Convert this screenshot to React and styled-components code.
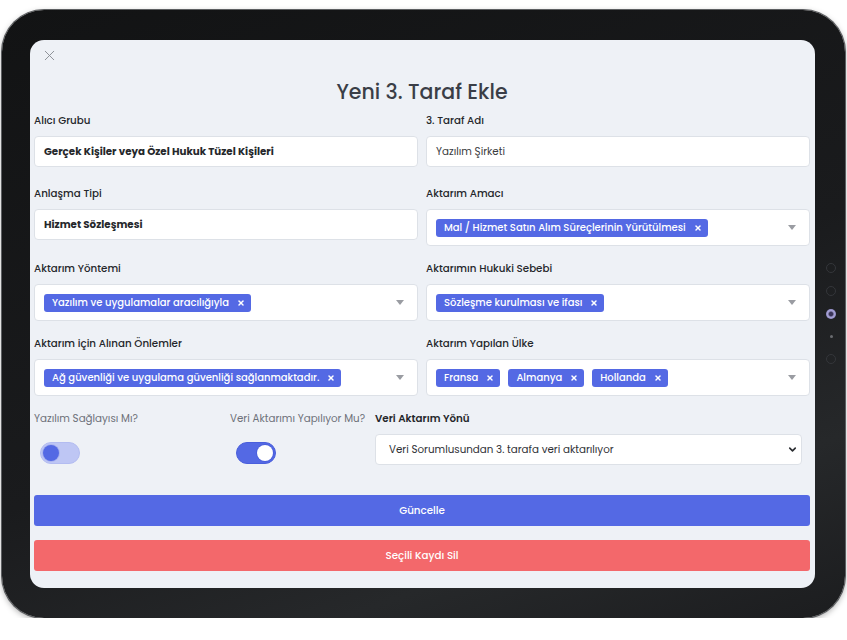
import React from "react";
import styled, { createGlobalStyle } from "styled-components";
import { X, ChevronDown } from "lucide-react";

const GlobalStyle = createGlobalStyle`
  html, body {
    margin: 0;
    padding: 0;
    background: #ffffff;
  }
  body {
    font-family: "Poppins", "Open Sans", "Noto Sans", sans-serif;
    color: #25272b;
  }
  * { box-sizing: border-box; }
`;

const rows = [
  [
    { label: "Alıcı Grubu", value: "Gerçek Kişiler veya Özel Hukuk Tüzel Kişileri", bold: true },
    { label: "3. Taraf Adı", value: "Yazılım Şirketi" },
  ],
  [
    { label: "Anlaşma Tipi", value: "Hizmet Sözleşmesi", bold: true },
    { label: "Aktarım Amacı", tags: ["Mal / Hizmet Satın Alım Süreçlerinin Yürütülmesi"] },
  ],
  [
    { label: "Aktarım Yöntemi", tags: ["Yazılım ve uygulamalar aracılığıyla"] },
    { label: "Aktarımın Hukuki Sebebi", tags: ["Sözleşme kurulması ve ifası"] },
  ],
  [
    { label: "Aktarım için Alınan Önlemler", tags: ["Ağ güvenliği ve uygulama güvenliği sağlanmaktadır."] },
    { label: "Aktarım Yapılan Ülke", tags: ["Fransa", "Almanya", "Hollanda"] },
  ],
];

export default function App() {
  return (
    <>
      <GlobalStyle />
      <Device>
        <Screen>
          <CloseButton>
            <X size={17} strokeWidth={1.3} />
          </CloseButton>
          <Title>Yeni 3. Taraf Ekle</Title>

          <FormGrid>
            {rows.map((row, i) =>
              row.map((f) => (
                <Field key={f.label} $first={i === 0}>
                  <Label>{f.label}</Label>
                  {f.tags ? (
                    <MultiSelect>
                      <Tags>
                        {f.tags.map((t) => (
                          <Tag key={t}>
                            {t}
                            <X size={8} strokeWidth={4.5} />
                          </Tag>
                        ))}
                      </Tags>
                      <Caret />
                    </MultiSelect>
                  ) : (
                    <Input $bold={f.bold}>{f.value}</Input>
                  )}
                </Field>
              ))
            )}
          </FormGrid>

          <ToggleRow>
            <ToggleField>
              <MutedLabel>Yazılım Sağlayısı Mı?</MutedLabel>
              <Switch $on={false}><Knob $on={false} /></Switch>
            </ToggleField>
            <ToggleField>
              <MutedLabel>Veri Aktarımı Yapılıyor Mu?</MutedLabel>
              <Switch $on={true}><Knob $on={true} /></Switch>
            </ToggleField>
            <ToggleField>
              <StrongLabel>Veri Aktarım Yönü</StrongLabel>
              <Select>
                Veri Sorumlusundan 3. tarafa veri aktarılıyor
                <ChevronDown size={11} strokeWidth={3.5} color="#2a2c30" />
              </Select>
            </ToggleField>
          </ToggleRow>

          <Button $color="#5469e4" $gap="30px">Güncelle</Button>
          <Button $color="#f3686b" $gap="14px">Seçili Kaydı Sil</Button>
        </Screen>

        <SideDots>
          <Dot />
          <Dot />
          <Dot $lens />
          <Dot $small />
          <Dot />
        </SideDots>
        <EdgeButtons>
          <EdgeKey />
          <EdgeKey />
        </EdgeButtons>
      </Device>
    </>
  );
}

const Device = styled.div`
  position: relative;
  margin: 10px 0 0 2px;
  width: 843px;
  height: 608px;
  padding: 30px 30px 30px 28px;
  border-radius: 42px;
  background: linear-gradient(160deg, #121314 0%, #1a1b1d 55%, #26282a 80%, #1c1d1f 100%);
  box-shadow: 0 0 0 1px #5d5f62, 0 2px 6px rgba(0, 0, 0, 0.35);
`;

const Screen = styled.div`
  height: 548px;
  border-radius: 14px;
  background: #eef1f6;
  padding: 10px 5px 0 4px;
  display: flex;
  flex-direction: column;
  overflow: hidden;
`;

const CloseButton = styled.div`
  display: flex;
  align-items: center;
  height: 12px;
  margin-top: -1px;
  padding-left: 7px;
  color: #878a91;
`;

const Title = styled.h2`
  margin: 16px 0 0;
  height: 30px;
  line-height: 30px;
  text-align: center;
  font-size: 20.5px;
  font-weight: 500;
  color: #3a3e47;
`;

const FormGrid = styled.div`
  display: grid;
  grid-template-columns: 1fr 1fr;
  column-gap: 8px;
  row-gap: 15px;
  margin-top: 6px;
`;

const Field = styled.div`
  display: flex;
  flex-direction: column;
  gap: 7px;
  margin-bottom: ${(p) => (p.$first ? "4px" : "0")};
`;

const Label = styled.div`
  height: 16px;
  line-height: 16px;
  font-size: 10.3px;
  font-weight: 500;
  color: #25272b;
`;

const Input = styled.div`
  height: 31px;
  display: flex;
  align-items: center;
  padding: 0 9px;
  background: #ffffff;
  border: 1px solid #dde1e7;
  border-radius: 4px;
  font-size: 10.3px;
  font-weight: ${(p) => (p.$bold ? 700 : 400)};
  color: ${(p) => (p.$bold ? "#25272b" : "#3a3c40")};
`;

const MultiSelect = styled.div`
  height: 37px;
  display: flex;
  align-items: center;
  justify-content: space-between;
  padding: 0 13px 0 9px;
  background: #ffffff;
  border: 1px solid #dde1e7;
  border-radius: 4px;
`;

const Tags = styled.div`
  display: flex;
  gap: 8px;
`;

const Tag = styled.span`
  display: inline-flex;
  align-items: center;
  gap: 8px;
  height: 18px;
  padding: 0 6px 0 8px;
  border-radius: 3px;
  background: #5469e4;
  color: #ffffff;
  font-size: 10px;
  font-weight: 500;
  white-space: nowrap;
`;

const Caret = styled.span`
  width: 0;
  height: 0;
  border-left: 4.5px solid transparent;
  border-right: 4.5px solid transparent;
  border-top: 5px solid #9a9ca2;
`;

const ToggleRow = styled.div`
  display: grid;
  grid-template-columns: 196px 145px 427px;
  margin-top: 15px;
`;

const ToggleField = styled.div`
  display: flex;
  flex-direction: column;
  align-items: flex-start;
  gap: 7px;
`;

const MutedLabel = styled.div`
  height: 16px;
  line-height: 16px;
  font-size: 10.3px;
  font-weight: 400;
  color: #6d7079;
  white-space: nowrap;
`;

const StrongLabel = styled(MutedLabel)`
  font-weight: 600;
  color: #25272b;
`;

const Switch = styled.div`
  position: relative;
  margin: 8px 0 0 6px;
  width: 40px;
  height: 22px;
  border-radius: 11px;
  background: ${(p) => (p.$on ? "#5469e4" : "#bec6f4")};
  border: 1px solid ${(p) => (p.$on ? "#4a5fdc" : "#b3bcf1")};
`;

const Knob = styled.span`
  position: absolute;
  top: 2px;
  left: ${(p) => (p.$on ? "20px" : "2px")};
  width: 16px;
  height: 16px;
  border-radius: 50%;
  background: ${(p) => (p.$on ? "#ffffff" : "#5469e4")};
  box-shadow: ${(p) => (p.$on ? "0 0 0 1px #4a5fdc" : "0 0 0 1px #a9b3ef")};
`;

const Select = styled.div`
  width: 427px;
  height: 31px;
  display: flex;
  align-items: center;
  justify-content: space-between;
  padding: 0 3px 0 13px;
  background: #ffffff;
  border: 1px solid #dde1e7;
  border-radius: 4px;
  font-size: 10.3px;
  color: #2f3136;
`;

const Button = styled.div`
  height: 31px;
  margin-top: ${(p) => p.$gap};
  display: flex;
  align-items: center;
  justify-content: center;
  border-radius: 3px;
  background: ${(p) => p.$color};
  color: #ffffff;
  font-size: 10.3px;
  font-weight: 500;
`;

const SideDots = styled.div`
  position: absolute;
  top: 253px;
  right: 9px;
  display: flex;
  flex-direction: column;
  align-items: center;
  gap: 13px;
`;

const Dot = styled.span`
  width: ${(p) => (p.$small ? "3px" : "10px")};
  height: ${(p) => (p.$small ? "3px" : "10px")};
  margin: ${(p) => (p.$small ? "3px 0" : "0")};
  border-radius: 50%;
  border: ${(p) => (p.$small || p.$lens ? "none" : "1px solid #34363a")};
  background: ${(p) =>
    p.$lens
      ? "radial-gradient(circle at 50% 50%, #3a3458 0 25%, #a9a4d8 45%, #7a75b0 100%)"
      : p.$small
      ? "#6a6c70"
      : "transparent"};
`;

const EdgeButtons = styled.div`
  position: absolute;
  bottom: -3px;
  left: 715px;
  display: flex;
  gap: 3px;
`;

const EdgeKey = styled.span`
  width: 34px;
  height: 3px;
  border-radius: 0 0 2px 2px;
  background: #2a2b2d;
`;
